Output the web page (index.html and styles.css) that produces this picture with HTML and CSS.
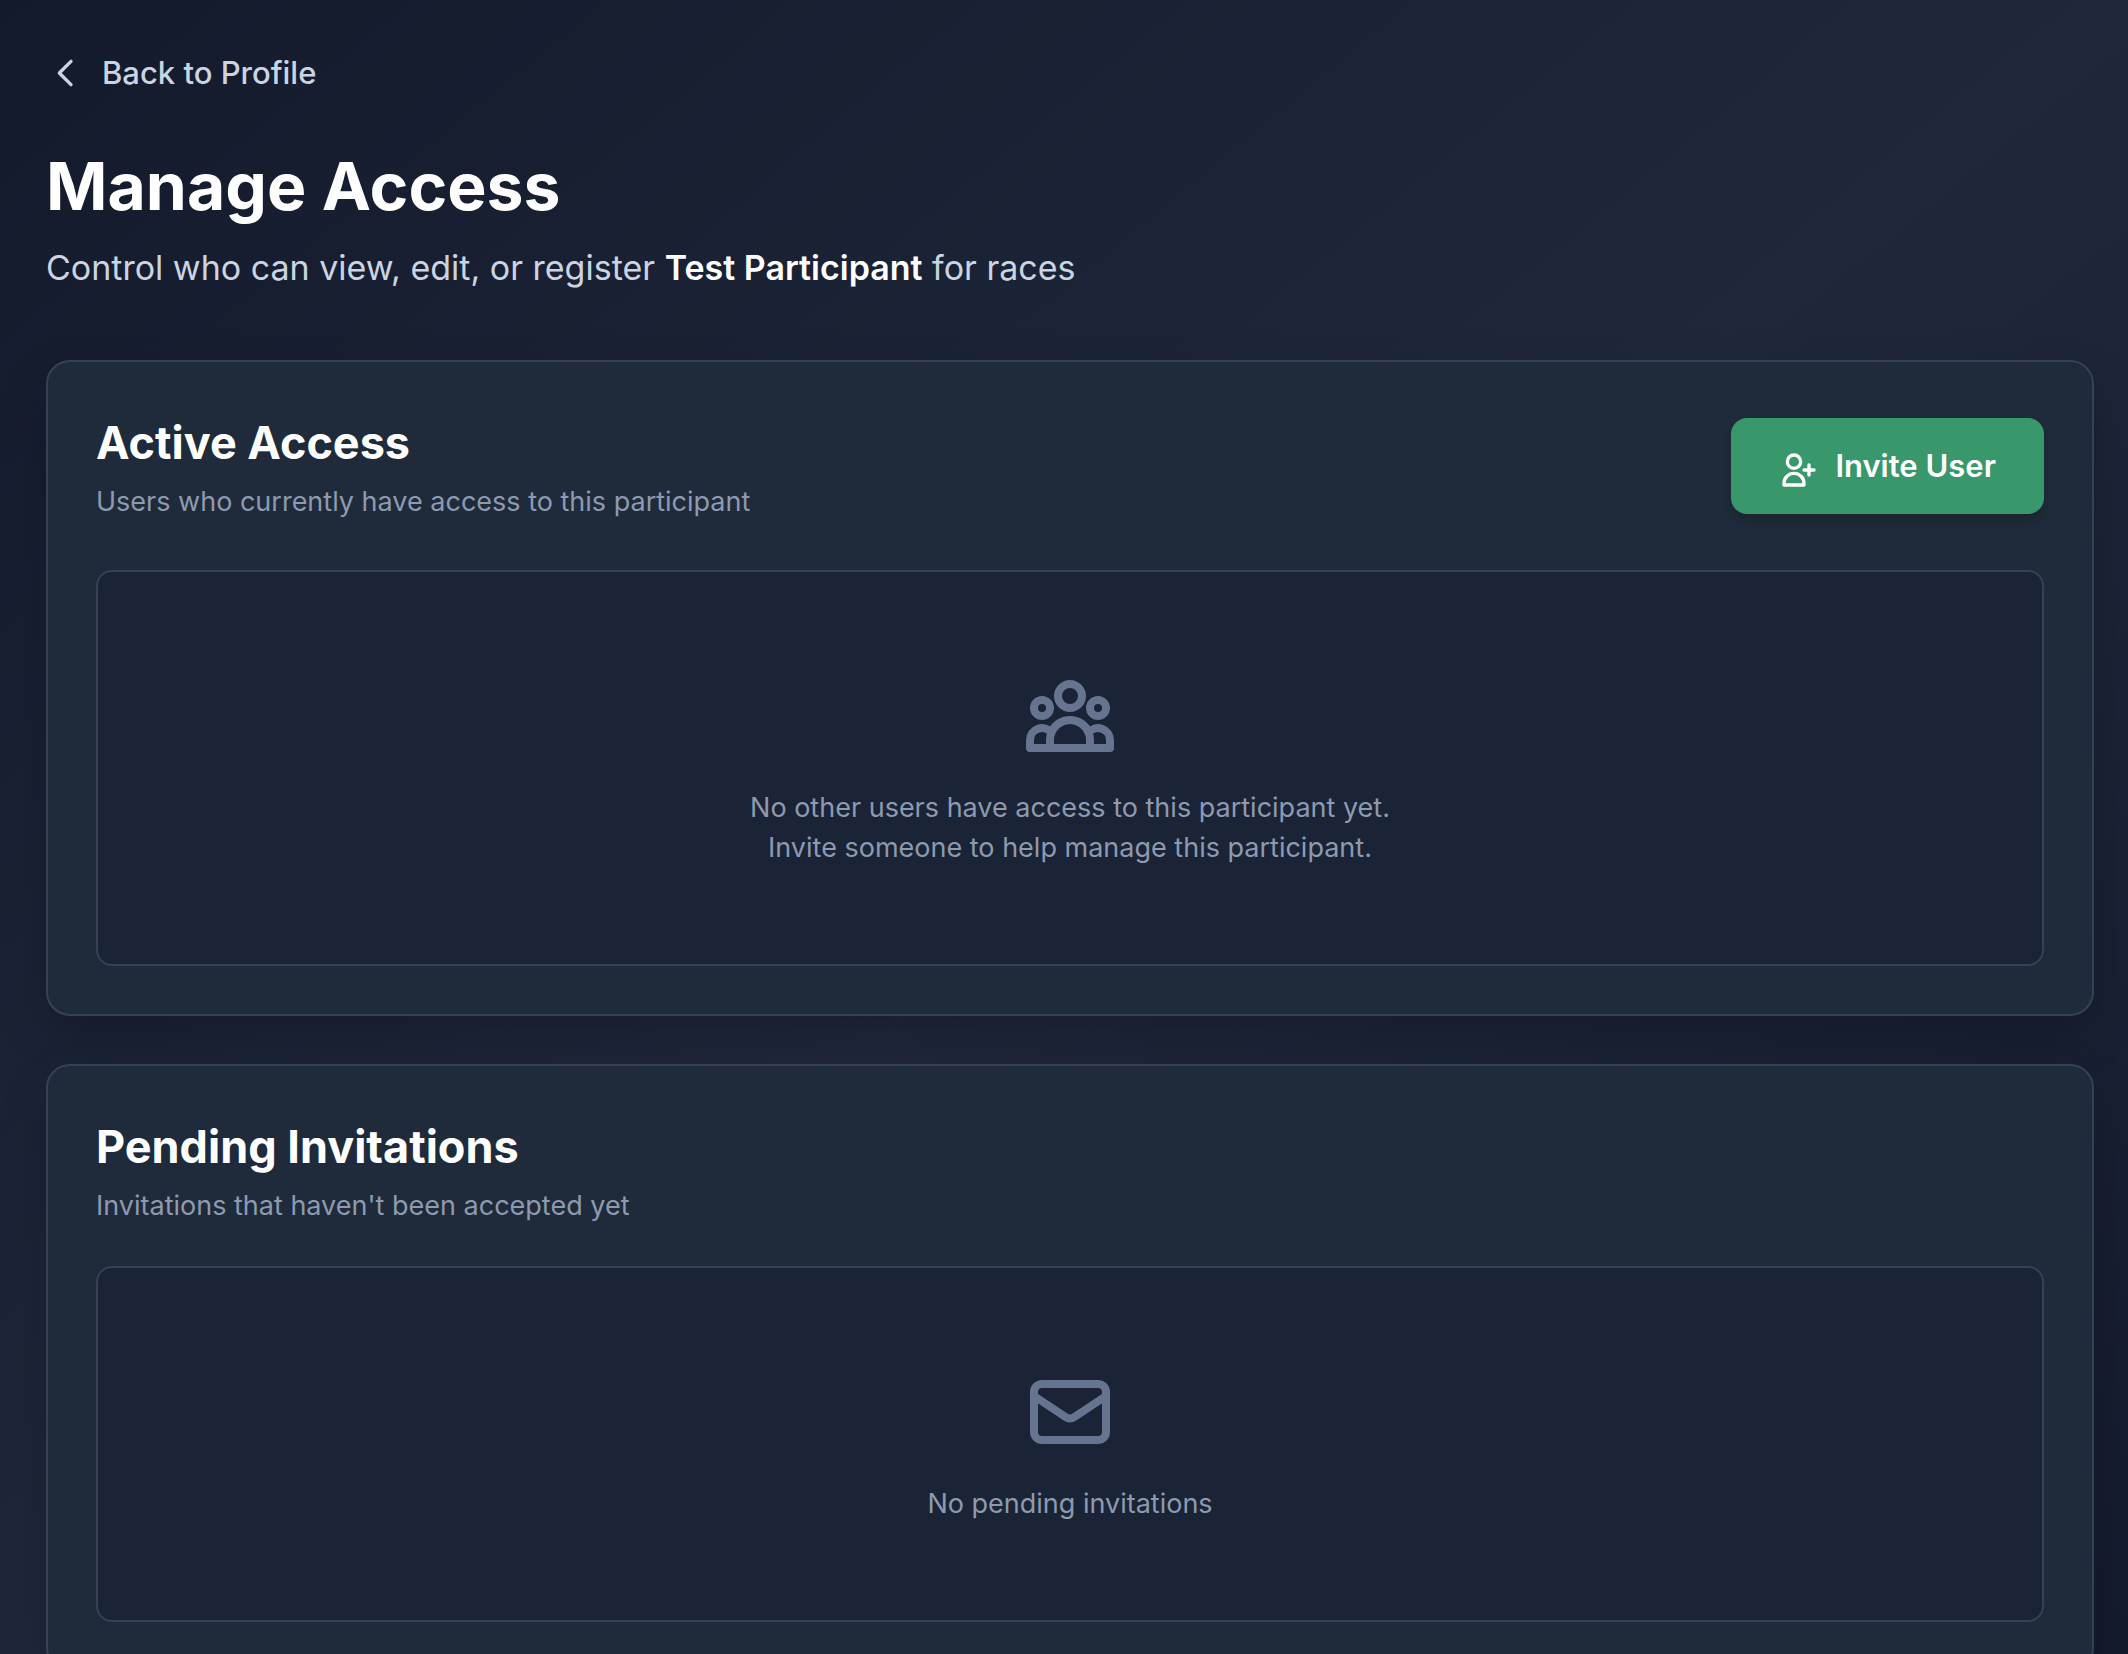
FILE: index.html
```html
<!DOCTYPE html>
<html lang="en">
<head>
  <meta charset="UTF-8">
  <meta name="viewport" content="width=device-width, initial-scale=1.0">
  <title>Manage Access</title>
  <link rel="stylesheet" href="styles.css">
</head>
<body>
  <main class="page">
    <a href="#" class="back-link">
      <svg class="icon" viewBox="0 0 24 24" aria-hidden="true">
        <path d="M15 19l-7-7 7-7"/>
      </svg>
      Back to Profile
    </a>

    <header class="page-header">
      <h1>Manage Access</h1>
      <p>Control who can view, edit, or register <strong>Test Participant</strong> for races</p>
    </header>

    <section class="card">
      <div class="card-header with-action">
        <div>
          <h2>Active Access</h2>
          <p>Users who currently have access to this participant</p>
        </div>
        <button type="button" class="invite-button">
          <svg class="icon" viewBox="0 0 24 24" aria-hidden="true">
            <path d="M18 9v3m0 0v3m0-3h3m-3 0h-3m-2-5a4 4 0 11-8 0 4 4 0 018 0zM3 20a6 6 0 0112 0v1H3v-1z"/>
          </svg>
          Invite User
        </button>
      </div>
      <div class="empty">
        <svg class="icon icon-large" viewBox="0 0 24 24" aria-hidden="true">
          <path d="M17 20h5v-2a3 3 0 00-5.356-1.857M17 20H7m10 0v-2c0-.656-.126-1.283-.356-1.857M7 20H2v-2a3 3 0 015.356-1.857M7 20v-2c0-.656.126-1.283.356-1.857m0 0a5.002 5.002 0 019.288 0M15 7a3 3 0 11-6 0 3 3 0 016 0zm6 3a2 2 0 11-4 0 2 2 0 014 0zM7 10a2 2 0 11-4 0 2 2 0 014 0z"/>
        </svg>
        <p>No other users have access to this participant yet.<br>Invite someone to help manage this participant.</p>
      </div>
    </section>

    <section class="card">
      <div class="card-header">
        <h2>Pending Invitations</h2>
        <p>Invitations that haven't been accepted yet</p>
      </div>
      <div class="empty">
        <svg class="icon icon-large" viewBox="0 0 24 24" aria-hidden="true">
          <path d="M3 8l7.89 5.26a2 2 0 002.22 0L21 8M5 19h14a2 2 0 002-2V7a2 2 0 00-2-2H5a2 2 0 00-2 2v10a2 2 0 002 2z"/>
        </svg>
        <p>No pending invitations</p>
      </div>
    </section>
  </main>
</body>
</html>
```

FILE: styles.css
```css
* {
  box-sizing: border-box;
}

body {
  margin: 0;
  min-height: 100vh;
  font-family: Inter, "Liberation Sans", sans-serif;
  background: linear-gradient(to bottom right, #131a2c, #1f283b 50%, #131a2c);
  color: #fff;
}

h1, h2, p {
  margin: 0;
}

.page {
  padding: 48px 34px 48px 46px;
}

.icon {
  width: 40px;
  height: 40px;
  flex-shrink: 0;
  fill: none;
  stroke: currentColor;
  stroke-width: 2;
  stroke-linecap: round;
  stroke-linejoin: round;
}

.icon-large {
  width: 96px;
  height: 96px;
  color: #67748f;
}

.back-link {
  display: inline-flex;
  align-items: center;
  gap: 16px;
  margin-bottom: 48px;
  font-size: 31px;
  font-weight: 500;
  line-height: 50px;
  color: #cbd5e1;
  text-decoration: none;
}

.page-header {
  margin-bottom: 64px;
}

h1 {
  font-size: 66px;
  line-height: 80px;
  font-weight: 700;
}

.page-header p {
  margin-top: 14px;
  font-size: 34px;
  line-height: 56px;
  color: #cbd5e1;
}

.page-header strong {
  font-weight: 600;
  color: #fff;
}

.card {
  padding: 48px;
  margin-bottom: 48px;
  background-color: #1f2a3a;
  border: 2px solid #364157;
  border-radius: 24px;
  box-shadow: 0 20px 50px -6px rgba(0, 0, 0, 0.25);
}

.card-header {
  margin-bottom: 40px;
}

.with-action {
  display: flex;
  align-items: center;
  justify-content: space-between;
  margin-bottom: 48px;
}

h2 {
  font-size: 45px;
  line-height: 66px;
  font-weight: 700;
}

.card-header p {
  margin-top: 6px;
  font-size: 27px;
  line-height: 40px;
  color: #8d9ab0;
}

.invite-button {
  display: inline-flex;
  align-items: flex-end;
  gap: 16px;
  padding: 24px 48px;
  border: none;
  border-radius: 16px;
  background-color: #38986b;
  box-shadow: 0 8px 12px -2px rgba(0, 0, 0, 0.15);
  color: #fff;
  font-family: inherit;
  font-size: 31px;
  font-weight: 600;
  line-height: 48px;
  cursor: pointer;
}

.empty {
  padding: 96px 48px;
  background-color: #1b2336;
  border: 2px solid #364157;
  border-radius: 16px;
  text-align: center;
}

.empty .icon {
  display: block;
  margin: 0 auto 24px;
}

.empty p {
  font-size: 27px;
  line-height: 40px;
  color: #8d9ab0;
}
```
